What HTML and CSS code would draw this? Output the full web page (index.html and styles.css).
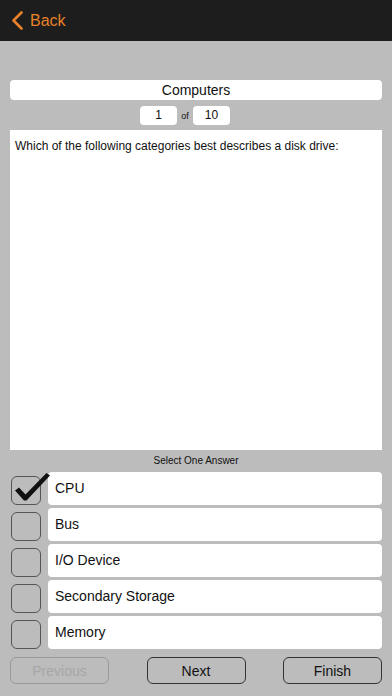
FILE: index.html
```html
<!DOCTYPE html>
<html lang="en">
<head>
    <meta charset="UTF-8">
    <meta name="viewport" content="width=device-width, initial-scale=1.0">
    <title>Quiz</title>
    <link rel="stylesheet" href="styles.css">
</head>
<body>
    <div class="navBar">
        <a class="backLink" href="#">
            <svg class="chevron" width="13" height="19" viewBox="0 0 13 19">
                <path d="M10.5 1.5 L2.5 9.5 L10.5 17.5" fill="none" stroke="#e8812a" stroke-width="2.6" stroke-linecap="round" stroke-linejoin="round"/>
            </svg>
            <span>Back</span>
        </a>
    </div>
    <div class="quizArea">
        <div class="titleBar">Computers</div>
        <div class="pager">
            <span class="pageBox">1</span>
            <span class="pageOf">of</span>
            <span class="pageBox">10</span>
        </div>
        <div class="question">Which of the following categories best describes a disk drive:</div>
        <div class="selectLabel">Select One Answer</div>
        <div class="answers">
            <div class="answer">
                <div class="checkBox checked">
                    <svg class="checkMark" width="40" height="32" viewBox="0 0 40 32">
                        <path d="M2 18.5 L6 15.5 L12.5 22.5 L33.5 1 L37 3.5 L13.5 28.5 L11 28.5 Z" fill="#111"/>
                    </svg>
                </div>
                <div class="answerText">CPU</div>
            </div>
            <div class="answer">
                <div class="checkBox"></div>
                <div class="answerText">Bus</div>
            </div>
            <div class="answer">
                <div class="checkBox"></div>
                <div class="answerText">I/O Device</div>
            </div>
            <div class="answer">
                <div class="checkBox"></div>
                <div class="answerText">Secondary Storage</div>
            </div>
            <div class="answer">
                <div class="checkBox"></div>
                <div class="answerText">Memory</div>
            </div>
        </div>
        <div class="buttons">
            <button class="btn btnDisabled">Previous</button>
            <button class="btn">Next</button>
            <button class="btn">Finish</button>
        </div>
    </div>
</body>
</html>
```

FILE: styles.css
```css
*
{
    box-sizing: border-box;
}
body
{
    margin: 0px;
    background-color: #bcbcbc;
    font-family: "Liberation Sans", Arial, sans-serif;
    color: #111;
}
.navBar
{
    height: 41px;
    background-color: #1d1d1d;
    display: flex;
    align-items: center;
    padding-left: 11px;
}
.backLink
{
    display: flex;
    align-items: center;
    gap: 6px;
    color: #e8812a;
    text-decoration: none;
    font-size: 16px;
}
.quizArea
{
    padding: 39px 10px 0px 10px;
}
.titleBar
{
    height: 20px;
    background-color: white;
    border-radius: 4px;
    text-align: center;
    font-size: 14px;
    line-height: 20px;
}
.pager
{
    display: flex;
    justify-content: center;
    align-items: center;
    margin-top: 6px;
    padding-right: 22px;
    height: 19px;
}
.pageBox
{
    width: 37px;
    height: 19px;
    background-color: white;
    border-radius: 4px;
    text-align: center;
    font-size: 12px;
    line-height: 19px;
}
.pageOf
{
    font-size: 9px;
    width: 16px;
    text-align: center;
}
.question
{
    margin-top: 5px;
    height: 320px;
    background-color: white;
    padding: 9px 5px;
    font-size: 12px;
}
.selectLabel
{
    height: 22px;
    line-height: 22px;
    text-align: center;
    font-size: 10px;
}
.answers
{
    display: flex;
    flex-direction: column;
    gap: 3px;
}
.answer
{
    display: flex;
    align-items: flex-end;
    height: 33px;
}
.checkBox
{
    position: relative;
    width: 30px;
    height: 29px;
    margin-left: 1px;
    margin-right: 7px;
    border: 1px solid #555;
    border-radius: 6px;
}
.checkMark
{
    position: absolute;
    left: 1px;
    top: -5px;
}
.answerText
{
    flex: 1;
    height: 33px;
    background-color: white;
    border-radius: 4px;
    padding-left: 7px;
    font-size: 14px;
    line-height: 33px;
}
.buttons
{
    display: flex;
    justify-content: space-between;
    margin-top: 8px;
}
.btn
{
    width: 99px;
    height: 27px;
    border: 1px solid #333;
    border-radius: 6px;
    background-color: transparent;
    font-family: "Liberation Sans", Arial, sans-serif;
    font-size: 14px;
    color: #111;
    padding: 0px;
}
.btnDisabled
{
    border-color: #999;
    color: #a6a6a6;
}
```
